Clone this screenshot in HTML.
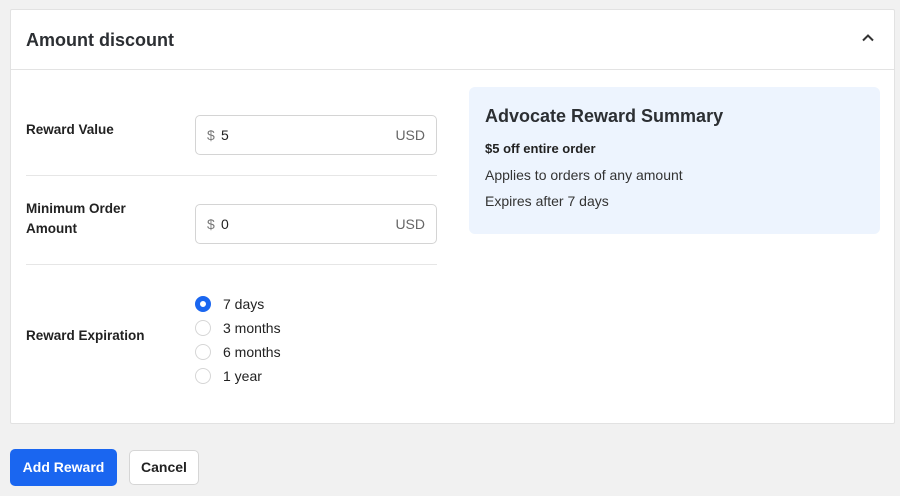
<!DOCTYPE html>
<html><head><style>
*{box-sizing:border-box;margin:0;padding:0}
body{width:900px;height:496px;background:#f1f1f1;font-family:"Liberation Sans",sans-serif;color:#1f2328;position:relative;overflow:hidden}
.card{position:absolute;left:10px;top:9px;width:885px;height:415px;background:#fff;border:1px solid #e2e2e2;border-radius:2px}
.hdr{position:absolute;left:0;top:0;width:100%;height:60px;border-bottom:1px solid #e3e3e3}
.hdr h1{position:absolute;left:15px;top:20px;font-size:18px;font-weight:bold;color:#2c2f33}
.abs{position:absolute}
.lbl{font-size:13.5px;font-weight:bold;color:#222;line-height:20px}
.inp{position:absolute;left:184px;width:242px;height:40px;border:1px solid #d4d4d4;border-radius:5px;font-size:14px}
.inp .d{position:absolute;left:11px;top:11px;color:#777}
.inp .v{position:absolute;left:25px;top:11px;color:#222}
.inp .u{position:absolute;right:11px;top:11px;color:#666}
.hr{position:absolute;left:15px;width:411px;height:1px;background:#e6e6e6}
.radio{position:absolute;left:184px;width:16px;height:16px;border:1px solid #d6d6d6;border-radius:50%}
.rl{position:absolute;left:212px;font-size:14px;color:#222}
.sum{position:absolute;left:458px;top:77px;width:411px;height:147px;background:#edf4fe;border-radius:6px}
.btn{position:absolute;font-size:14px;font-weight:bold;border-radius:5px;text-align:center}
</style></head><body>
<div class="card">
 <div class="hdr"><h1>Amount discount</h1>
  <svg class="abs" style="left:850px;top:23px" width="14" height="10" viewBox="0 0 14 10"><path d="M2 7.5L7 2.5L12 7.5" fill="none" stroke="#333" stroke-width="2"/></svg>
 </div>
 <div class="abs lbl" style="left:15px;top:110px">Reward Value</div>
 <div class="inp" style="top:105px"><span class="d">$</span><span class="v">5</span><span class="u">USD</span></div>
 <div class="hr" style="top:165px"></div>
 <div class="abs lbl" style="left:15px;top:189px">Minimum Order<br>Amount</div>
 <div class="inp" style="top:194px"><span class="d">$</span><span class="v">0</span><span class="u">USD</span></div>
 <div class="hr" style="top:254px"></div>
 <div class="abs lbl" style="left:15px;top:316px">Reward Expiration</div>
 <div class="radio" style="top:286px;border:5px solid #1a66f0"></div><div class="rl" style="top:286px">7 days</div>
 <div class="radio" style="top:310px"></div><div class="rl" style="top:310px">3 months</div>
 <div class="radio" style="top:334px"></div><div class="rl" style="top:334px">6 months</div>
 <div class="radio" style="top:358px"></div><div class="rl" style="top:358px">1 year</div>
 <div class="sum">
  <div class="abs" style="left:16px;top:19px;font-size:18px;font-weight:bold;color:#2c2f33">Advocate Reward Summary</div>
  <div class="abs" style="left:16px;top:54px;font-size:13px;font-weight:bold;color:#222">$5 off entire order</div>
  <div class="abs" style="left:16px;top:80px;font-size:14px;color:#333">Applies to orders of any amount</div>
  <div class="abs" style="left:16px;top:106px;font-size:14px;color:#333">Expires after 7 days</div>
 </div>
</div>
<div class="btn" style="left:10px;top:449px;width:107px;height:37px;line-height:37px;background:#1a66f0;color:#fff">Add Reward</div>
<div class="btn" style="left:129px;top:450px;width:70px;height:35px;line-height:33px;background:#fff;border:1px solid #d6d6d6;color:#222">Cancel</div>
</body></html>
